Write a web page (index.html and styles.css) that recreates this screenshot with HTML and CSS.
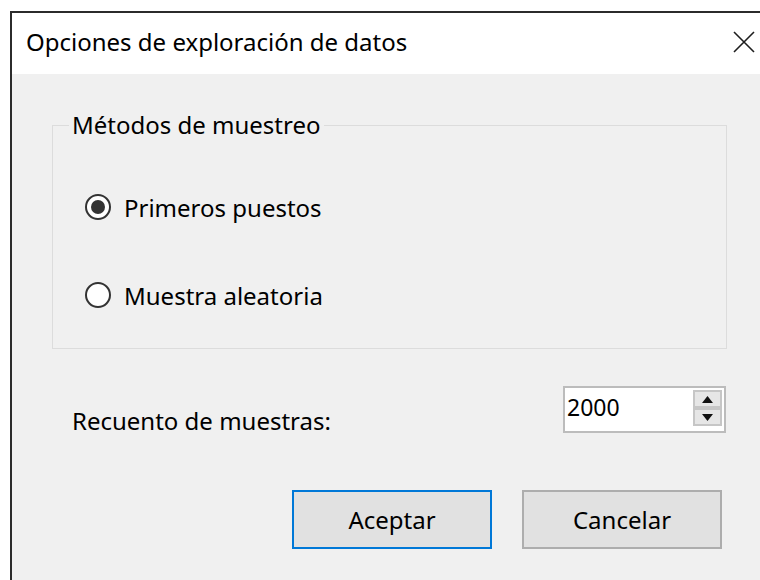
FILE: index.html
```html
<!DOCTYPE html>
<html lang="es">
<head>
<meta charset="utf-8">
<title>Opciones de exploración de datos</title>
<link rel="stylesheet" href="styles.css">
</head>
<body>
  <div class="window">
    <div class="titlebar">
      <span class="title">Opciones de exploración de datos</span>
      <button class="close" aria-label="Cerrar">
        <svg width="22" height="22" viewBox="0 0 22 22"><path d="M1 1 L21 21 M21 1 L1 21" stroke="#1e1e1e" stroke-width="1.6" fill="none"/></svg>
      </button>
    </div>
    <div class="content">
      <fieldset class="group">
        <legend>Métodos de muestreo</legend>
        <div class="options">
          <label class="option"><span class="radio checked"></span><span>Primeros puestos</span></label>
          <label class="option"><span class="radio"></span><span>Muestra aleatoria</span></label>
        </div>
      </fieldset>
      <div class="count-row">
        <span class="count-label">Recuento de muestras:</span>
        <div class="spin">
          <span class="spin-value">2000</span>
          <div class="spin-buttons">
            <span class="spin-btn"><svg width="11" height="7" viewBox="0 0 11 7"><path d="M0 7 L5.5 0 L11 7 Z" fill="#111"/></svg></span>
            <span class="spin-btn"><svg width="11" height="7" viewBox="0 0 11 7"><path d="M0 0 L11 0 L5.5 7 Z" fill="#111"/></svg></span>
          </div>
        </div>
      </div>
      <div class="actions">
        <button class="btn default">Aceptar</button>
        <button class="btn">Cancelar</button>
      </div>
    </div>
  </div>
</body>
</html>
```
FILE: styles.css
```css
html, body {
  margin: 0;
  height: 100%;
  overflow: hidden;
  background: #ffffff;
}

body {
  font-family: "Noto Sans", "Open Sans", sans-serif;
  font-size: 24px;
  color: #000;
}

.window {
  margin: 11px 0 0 10px;
  width: 760px;
  height: 580px;
  border-top: 2px solid #2b2b2b;
  border-left: 2px solid #2b2b2b;
  background: #f0f0f0;
  display: flex;
  flex-direction: column;
}

.titlebar {
  height: 61px;
  flex: none;
  background: #ffffff;
  display: flex;
  align-items: center;
  padding: 0 17px 0 14px;
  box-sizing: border-box;
  width: 760px;
}

.title {
  line-height: 30px;
  margin-top: -4px;
}

.close {
  margin-left: auto;
  padding: 0;
  border: 0;
  background: none;
  width: 22px;
  height: 22px;
  margin-top: -4px;
  display: flex;
}

.content {
  padding-left: 40px;
  width: 675px;
  display: flex;
  flex-direction: column;
}

.group {
  margin: 36px 0 0 0;
  padding: 0 16px 35px;
  border: 1px solid #dcdcdc;
  box-sizing: border-box;
  width: 675px;
  min-width: 0;
}

.group legend {
  padding: 0 3px;
  line-height: 30px;
}

.options {
  display: flex;
  flex-direction: column;
  gap: 52px;
  padding-top: 49px;
  padding-left: 16px;
}

.option {
  display: flex;
  align-items: center;
  gap: 13px;
  height: 36px;
}

.radio {
  width: 26px;
  height: 26px;
  box-sizing: border-box;
  border: 2px solid #333;
  border-radius: 50%;
  background: #fff;
  display: flex;
  align-items: center;
  justify-content: center;
  flex: none;
}

.radio.checked::after {
  content: "";
  width: 14px;
  height: 14px;
  border-radius: 50%;
  background: #333;
}

.count-row {
  margin: 37px 1px 0 20px;
  display: flex;
  align-items: flex-end;
  justify-content: space-between;
}

.count-label {
  line-height: 30px;
  margin-bottom: -3px;
}

.spin {
  width: 163px;
  height: 47px;
  box-sizing: border-box;
  border: 2px solid #bcbcbc;
  background: #fff;
  display: flex;
  justify-content: space-between;
  padding: 1px 2px 0 2px;
}

.spin-value {
  line-height: 36px;
  font-size: 23px;
}

.spin-buttons {
  width: 29px;
  display: flex;
  flex-direction: column;
  padding-top: 1px;
}

.spin-btn {
  height: 18px;
  box-sizing: border-box;
  border: 2px solid #c6c6c6;
  background: #e6e6e6;
  display: flex;
  align-items: center;
  justify-content: center;
}

.actions {
  margin: 57px 5px 0 0;
  display: flex;
  justify-content: flex-end;
  gap: 30px;
}

.btn {
  width: 200px;
  height: 59px;
  box-sizing: border-box;
  border: 2px solid #adadad;
  background: #e1e1e1;
  font: inherit;
  color: #000;
  padding: 0;
}

.btn.default {
  border-color: #0078d7;
}
```
